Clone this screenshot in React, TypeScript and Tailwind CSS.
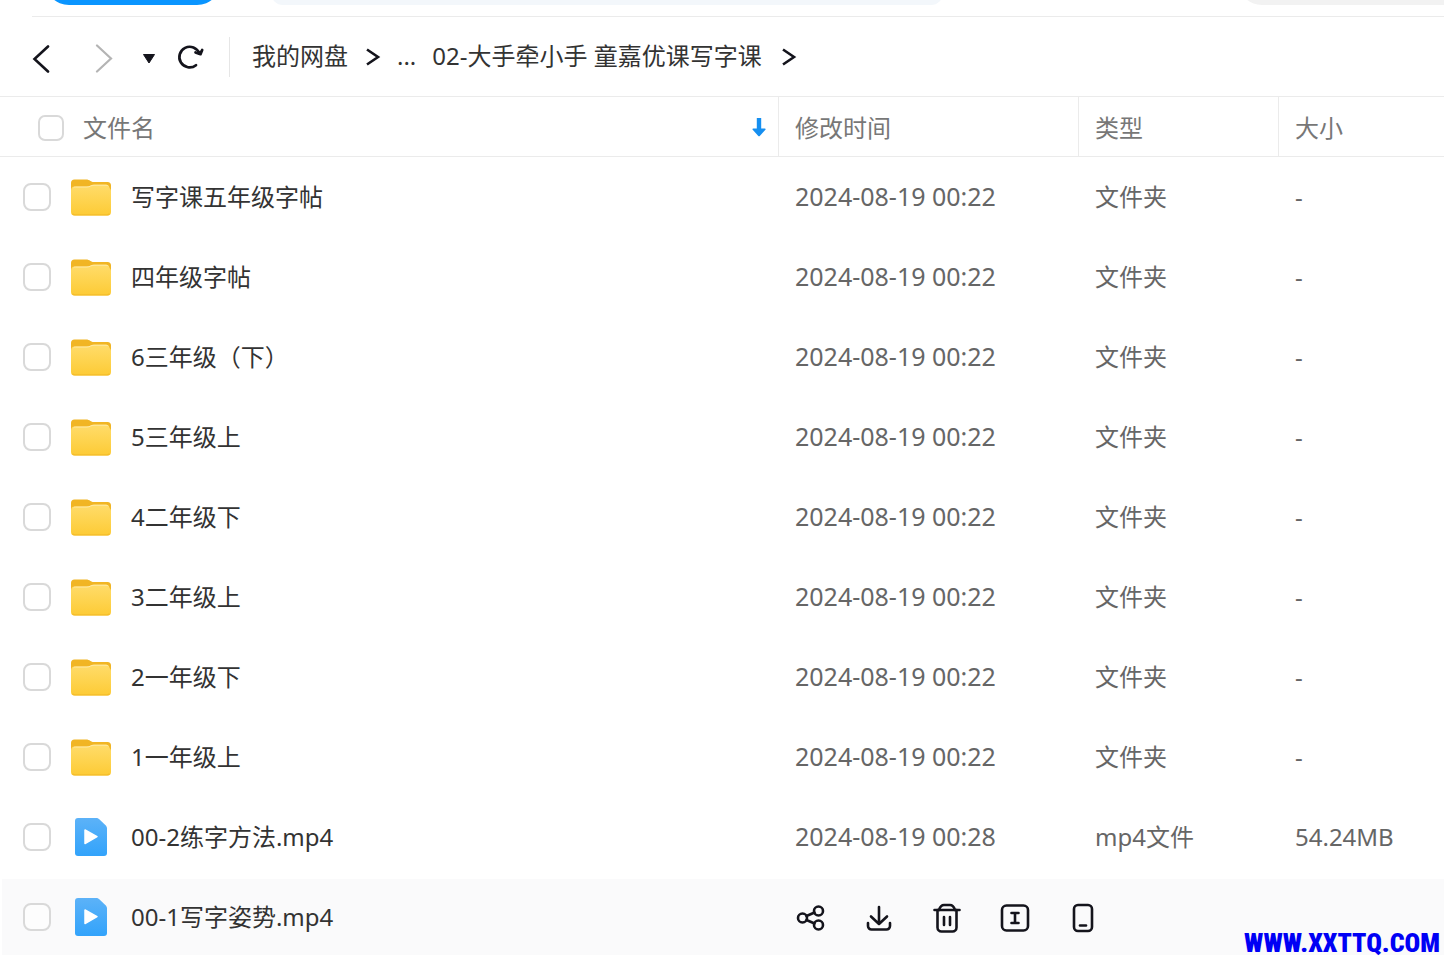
import React from 'react';

interface FileItem {
  name: string;
  time: string;
  type: string;
  size: string;
  kind: 'folder' | 'video';
  active?: boolean;
}

const folder = (name: string): FileItem => ({
  name,
  time: '2024-08-19 00:22',
  type: '文件夹',
  size: '-',
  kind: 'folder',
});

const files: FileItem[] = [
  folder('写字课五年级字帖'),
  folder('四年级字帖'),
  folder('6三年级（下）'),
  folder('5三年级上'),
  folder('4二年级下'),
  folder('3二年级上'),
  folder('2一年级下'),
  folder('1一年级上'),
  { name: '00-2练字方法.mp4', time: '2024-08-19 00:28', type: 'mp4文件', size: '54.24MB', kind: 'video' },
  { name: '00-1写字姿势.mp4', time: '', type: '', size: '', kind: 'video', active: true },
];

const FolderIcon = () => (
  <svg width="42" height="38" viewBox="0 0 42 38" aria-hidden="true">
    <defs>
      <linearGradient id="folder-front" x1="0" y1="0" x2="0" y2="1">
        <stop offset="0" stopColor="#ffdc6a" />
        <stop offset="1" stopColor="#fdcb35" />
      </linearGradient>
    </defs>
    <path d="M1 5a3.500 3.500 0 0 1 3.500-3.500H16c2 0 3 .5 4.500 1.500S23 4 25 4h12.500A3.500 3.500 0 0 1 41 7.500V16H1z" fill="#f1b524" />
    <path d="M1 13c0-3 1-4.500 3.500-4.500h12c3 0 4-1.800 7-1.800H36c2.500 0 3 1 3.300 2.500S41 11 41 13v21a3.500 3.500 0 0 1-3.500 3.500h-33A3.500 3.500 0 0 1 1 34z" fill="url(#folder-front)" />
    <path d="M3.500 9.800c.5-.6 1-.8 2-.8H17c3 0 4-1.800 7-1.800h12c1 0 1.800.3 2.200.8" fill="none" stroke="#ffe9a6" />
    <path d="M2.500 35.600c.5.800 1.500 1.300 2.500 1.300h32c1 0 2-.5 2.500-1.300" fill="none" stroke="#f3bd2c" strokeWidth="1.200" />
  </svg>
);

const VideoIcon = () => (
  <svg width="42" height="38" viewBox="0 0 42 38" aria-hidden="true">
    <defs>
      <linearGradient id="video-page" x1="0" y1="0" x2="0" y2="1">
        <stop offset="0" stopColor="#5cb2f8" />
        <stop offset="1" stopColor="#32a3fb" />
      </linearGradient>
    </defs>
    <path d="M5 3a3 3 0 0 1 3-3h18c1.500 0 2.300.4 3.300 1.300l6 5.700c1.200 1.200 1.700 2 1.700 3.500V35a3 3 0 0 1-3 3H8a3 3 0 0 1-3-3z" fill="url(#video-page)" />
    <path d="M15 12v13.500L27 18.700z" fill="#fff" stroke="#fff" strokeWidth="1.500" strokeLinejoin="round" />
  </svg>
);

const Crumb = () => (
  <svg width="16" height="20" viewBox="0 0 16 20" fill="none" stroke="#14141c" strokeWidth="2.600" aria-hidden="true">
    <path d="M2 2.500l11 7.500L2 17.500" />
  </svg>
);

const actions = [
  {
    label: '分享',
    icon: (
      <>
        <circle cx="7.500" cy="16" r="4.500" />
        <circle cx="23.500" cy="9" r="4.500" />
        <circle cx="23.500" cy="23" r="4.500" />
        <path d="M11.500 14l8-3.500M11.500 18l8 3.500" />
      </>
    ),
  },
  {
    label: '下载',
    icon: (
      <>
        <path d="M16 5v16.500M8 14.500l8 7.500 8-7.500" />
        <path d="M5 21v3a3.500 3.500 0 0 0 3.500 3.500h15A3.500 3.500 0 0 0 27 24v-3" />
      </>
    ),
  },
  {
    label: '删除',
    icon: (
      <>
        <path d="M3.500 8h25" />
        <path d="M6.500 8v17.500A4 4 0 0 0 10.500 29.500h11a4 4 0 0 0 4-4V8" />
        <path d="M8 8C9 5 10.500 3 13 3h6c2.500 0 4 2 5 5" />
        <path d="M13 15v8M19 15v8" />
      </>
    ),
  },
  {
    label: '重命名',
    icon: (
      <>
        <rect x="3" y="3.500" width="26" height="25" rx="4.500" />
        <path d="M12.500 11h7M12.500 21h7M16 11v10" />
      </>
    ),
  },
  {
    label: '发送到手机',
    icon: (
      <>
        <rect x="7" y="3" width="18" height="26" rx="4" />
        <path d="M13 23.500h6" />
      </>
    ),
  },
];

const checkbox = 'block shrink-0 appearance-none border-2 border-[#d9d9d9] bg-white/60 checked:bg-[#0a95ff]';

const TopBar = () => (
  <header className="flex h-4 items-end overflow-hidden pb-[11px] pl-[45px]">
    <button aria-label="上传" className="h-12 w-44 shrink-0 rounded-full bg-[#0a95ff]" />
    <input aria-label="搜索" className="ml-[50px] h-12 w-[672px] shrink rounded-xl bg-[#f3f7fb]" />
    <button aria-label="更多" className="-mr-6 ml-auto h-12 w-[230px] shrink-0 rounded-full bg-[#f2f2f2]" />
  </header>
);

const Toolbar = () => (
  <nav className="flex h-20 items-center border-b border-[#ebebeb] pl-[29px] text-2xl text-[#333]">
    <button aria-label="后退">
      <svg width="24" height="32" viewBox="0 0 24 32" fill="none" stroke="#14141c" strokeWidth="2.600" strokeLinecap="round">
        <path d="M19 5.500L5.500 18 19 30.500" />
      </svg>
    </button>
    <button aria-label="前进" className="ml-10">
      <svg width="24" height="32" viewBox="0 0 24 32" fill="none" stroke="#b4b4b4" strokeWidth="2.200" strokeLinecap="round">
        <path d="M4 4.500L18 17.500 4 30.500" />
      </svg>
    </button>
    <button aria-label="历史记录" className="ml-6">
      <svg width="16" height="32" viewBox="0 0 16 32" fill="#14141c" stroke="#14141c" strokeLinejoin="round">
        <path d="M2.500 13.500h11L8 22z" />
      </svg>
    </button>
    <button aria-label="刷新" className="ml-[19px]">
      <svg width="30" height="32" viewBox="0 0 30 32" fill="none" stroke="#14141c" strokeWidth="2.700">
        <path d="M20 24.200A10.300 10.300 0 1 1 23.300 12.500" strokeLinecap="round" />
        <path d="M19.500 11.500l5 1.700 1.700-4.200" strokeLinecap="round" strokeLinejoin="round" fill="#14141c" />
      </svg>
    </button>
    <div className="ml-[23px] h-10 w-px bg-[#e6e6e6]" />
    <a href="#root" className="ml-[22px] pb-0.5 whitespace-nowrap">我的网盘</a>
    <span className="ml-[17px]"><Crumb /></span>
    <a href="#more" className="ml-4 pb-0.5">...</a>
    <a href="#current" className="ml-4 pb-0.5 whitespace-nowrap">02-大手牵小手 童嘉优课写字课</a>
    <span className="ml-[19px]"><Crumb /></span>
  </nav>
);

const App: React.FC = () => {
  const headCell = 'border-b border-l border-[#ebebeb] pt-0.5 pl-4 text-left font-normal';

  return (
    <div className="relative min-h-screen overflow-hidden bg-white font-['Noto_Sans','Noto_Sans_CJK_SC',sans-serif]">
      <TopBar />
      <div className="ml-8 h-px bg-[#ebebeb]" />
      <Toolbar />

      <table className="w-full table-fixed border-separate border-spacing-0 text-2xl whitespace-nowrap text-[#666]">
        <colgroup>
          <col />
          <col className="w-[300px]" />
          <col className="w-[200px]" />
          <col className="w-[166px]" />
        </colgroup>
        <thead className="text-[#777]">
          <tr className="h-[60px]">
            <th className="border-b border-[#ebebeb] pt-0.5 pr-3 pl-[38px] font-normal">
              <div className="flex items-center">
                <input type="checkbox" aria-label="全选" className={`${checkbox} size-[26px] rounded-[7px]`} />
                <button className="ml-[19px] flex grow items-center justify-between">
                  文件名
                  <svg width="14" height="20" viewBox="0 0 14 20" fill="#168ff0" aria-hidden="true">
                    <path d="M4.800 0h4.400v10.500h3.700c.8 0 1 .8.500 1.300L7.800 17.900a1 1 0 0 1-1.500 0L.7 11.800c-.5-.5-.3-1.300.5-1.300h3.600z" />
                  </svg>
                </button>
              </div>
            </th>
            <th className={headCell}>修改时间</th>
            <th className={headCell}>类型</th>
            <th className={headCell}>大小</th>
          </tr>
        </thead>
        <tbody>
          {files.map((file) => (
            <tr key={file.name} className={`h-20 ${file.active ? 'bg-[#fafafb]' : ''}`}>
              <td className="border-y-2 border-l-2 border-white pl-[21px]">
                <label className="flex items-center text-[#333]">
                  <input type="checkbox" className={`${checkbox} size-7 rounded-lg`} />
                  <span className="mx-[19px]">{file.kind === 'folder' ? <FolderIcon /> : <VideoIcon />}</span>
                  {file.name}
                </label>
              </td>
              {file.active ? (
                <td colSpan={3} className="border-y-2 border-white pt-0.5 pl-[17px]">
                  <div className="flex gap-9">
                    {actions.map((action) => (
                      <button key={action.label} aria-label={action.label}>
                        <svg width="32" height="32" viewBox="0 0 32 32" fill="none" stroke="#14141c" strokeWidth="2.600" strokeLinecap="round" strokeLinejoin="round">
                          {action.icon}
                        </svg>
                      </button>
                    ))}
                  </div>
                </td>
              ) : (
                <>
                  <td className="pl-[17px] text-[25px]">{file.time}</td>
                  <td className="pl-[17px]">{file.type}</td>
                  <td className="pl-[17px]">{file.size}</td>
                </>
              )}
            </tr>
          ))}
        </tbody>
      </table>

      <div className="absolute right-1 bottom-1 font-['Impact','Roboto_Condensed',sans-serif] text-[26px] leading-8 font-black text-[#0000f5]">
        WWW.XXTTQ.COM
      </div>
    </div>
  );
};

export default App;
